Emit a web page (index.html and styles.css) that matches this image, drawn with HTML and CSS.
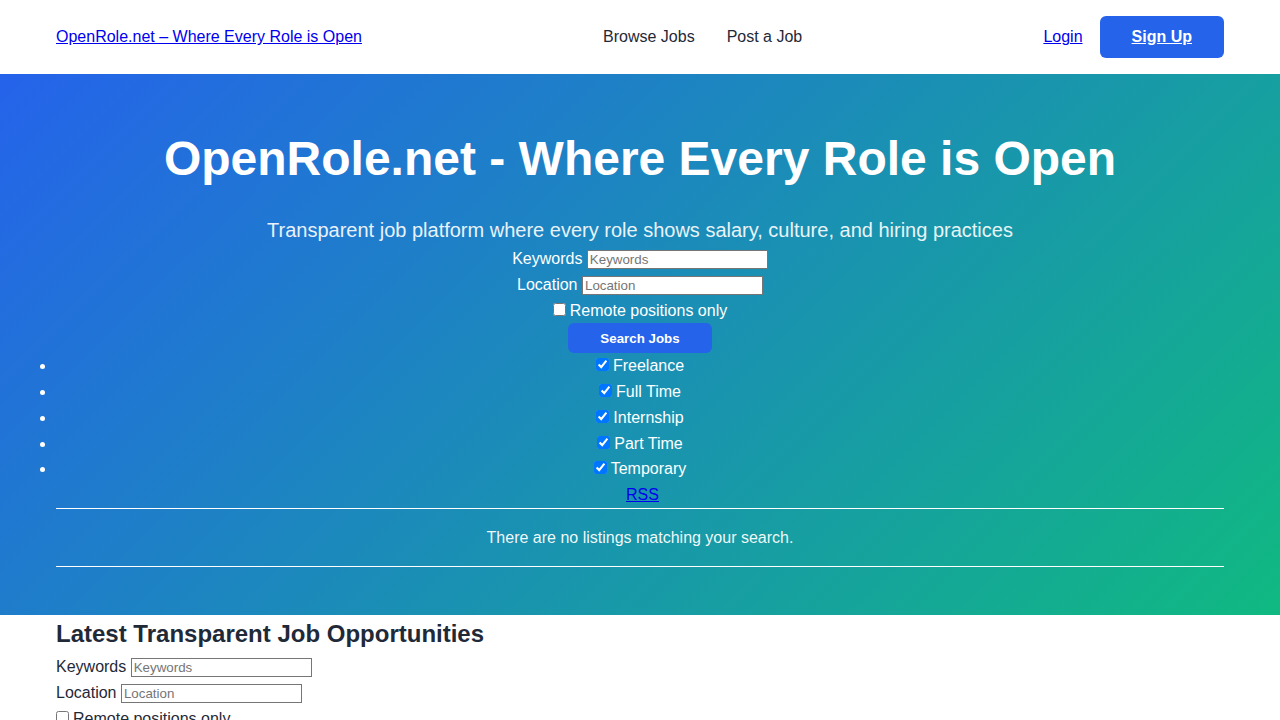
FILE: index.html
```html
<!DOCTYPE html>
<html lang="en">
<head>
<meta charset="utf-8">
<title>OpenRole.net – Where Every Role is Open</title>
<link rel="stylesheet" href="styles.css">
</head>
<body>
<header class="site-header">
  <div class="container header-inner">
    <a class="logo" href="#">OpenRole.net – Where Every Role is Open</a>
    <nav class="main-nav">
      <a href="#">Browse Jobs</a>
      <a href="#">Post a Job</a>
    </nav>
    <div class="header-actions">
      <a class="login" href="#">Login</a>
      <a class="signup" href="#">Sign Up</a>
    </div>
  </div>
</header>

<section class="hero">
  <div class="container">
    <h1 class="hero-title">OpenRole.net - Where Every Role is Open</h1>
    <p class="hero-sub">Transparent job platform where every role shows salary, culture, and hiring practices</p>
    <form class="job-filters hero-filters">
      <div class="field field-text"><label>Keywords</label> <input type="text" placeholder="Keywords"></div>
      <div class="field field-text"><label>Location</label> <input type="text" placeholder="Location"></div>
      <div class="field"><input type="checkbox" class="cb">Remote positions only</div>
      <div class="field"><button type="button" class="search-btn">Search Jobs</button></div>
      <ul class="job-types">
        <li><input type="checkbox" class="cb" checked>Freelance</li>
        <li><input type="checkbox" class="cb" checked>Full Time</li>
        <li><input type="checkbox" class="cb" checked>Internship</li>
        <li><input type="checkbox" class="cb" checked>Part Time</li>
        <li><input type="checkbox" class="cb" checked>Temporary</li>
      </ul>
      <div class="rss"><a href="#">RSS</a></div>
    </form>
    <div class="no-listings">There are no listings matching your search.</div>
  </div>
</section>

<section class="latest">
  <div class="container">
    <h2 class="latest-title">Latest Transparent Job Opportunities</h2>
    <form class="job-filters">
      <div class="field field-text"><label>Keywords</label> <input type="text" placeholder="Keywords"></div>
      <div class="field field-text"><label>Location</label> <input type="text" placeholder="Location"></div>
      <div class="field"><input type="checkbox" class="cb">Remote positions only</div>
    </form>
  </div>
</section>
</body>
</html>
```

FILE: styles.css
```css
html, body {
  margin: 0;
  padding: 0;
}
body {
  font-family: "Liberation Sans", Arial, sans-serif;
  font-size: 16px;
  line-height: 1.6;
  color: #1f2937;
  background: #ffffff;
}
.container {
  max-width: 1168px;
  margin: 0 auto;
}
.site-header {
  background: #ffffff;
}
.header-inner {
  display: flex;
  align-items: center;
  justify-content: space-between;
  padding: 16px 0;
}
.logo {
  color: #0000ee;
}
.main-nav {
  display: flex;
  gap: 32px;
}
.main-nav a {
  color: #1f2937;
  text-decoration: none;
}
.header-actions {
  display: flex;
  align-items: center;
  gap: 17px;
}
.login {
  color: #0000ee;
}
.signup {
  display: inline-block;
  background: #2563eb;
  color: #ffffff;
  font-weight: bold;
  padding: 0 32px;
  height: 42px;
  line-height: 42px;
  border-radius: 6px;
}
.hero {
  background: linear-gradient(135deg, #2563eb 0%, #10b981 100%);
  color: #ffffff;
  padding: 47px 0 48px;
  text-align: center;
}
.hero-title {
  font-size: 48px;
  line-height: 1.6;
  font-weight: bold;
  margin: 0 0 16px;
}
.hero-sub {
  font-size: 20px;
  line-height: 1.6;
  margin: 0;
  opacity: 0.9;
}
.job-filters {
  margin: 0;
}
.field {
  margin: 0;
}
.field-text {
  line-height: 26px;
}
.field input[type="text"] {
  font-family: "Liberation Sans", Arial, sans-serif;
  font-size: 13.33px;
  width: 175px;
  padding: 1px 2px;
  border: 1px solid #767676;
  border-radius: 0;
  background: #ffffff;
  color: #111;
}
.cb {
  margin: 3px 4px 3px 0;
}
.search-btn {
  background: #2563eb;
  color: #ffffff;
  border: none;
  border-radius: 6px;
  font-family: "Liberation Sans", Arial, sans-serif;
  font-size: 13.33px;
  font-weight: bold;
  width: 144px;
  height: 30px;
  padding: 0;
  vertical-align: top;
}
.job-types {
  margin: 0;
  padding: 0;
  list-style: disc outside;
}
.job-types li {
  text-align: center;
  line-height: 25.75px;
}
.rss {
  padding-left: 5px;
}
.rss a {
  color: #0000ee;
}
.no-listings {
  border-top: 1px solid #ffffff;
  border-bottom: 1px solid #ffffff;
  padding: 16px 0;
  color: rgba(255, 255, 255, 0.95);
}
.latest-title {
  font-size: 24px;
  line-height: 1.6;
  margin: 0;
  color: #1f2937;
}
.latest .job-filters {
  text-align: left;
}
```
